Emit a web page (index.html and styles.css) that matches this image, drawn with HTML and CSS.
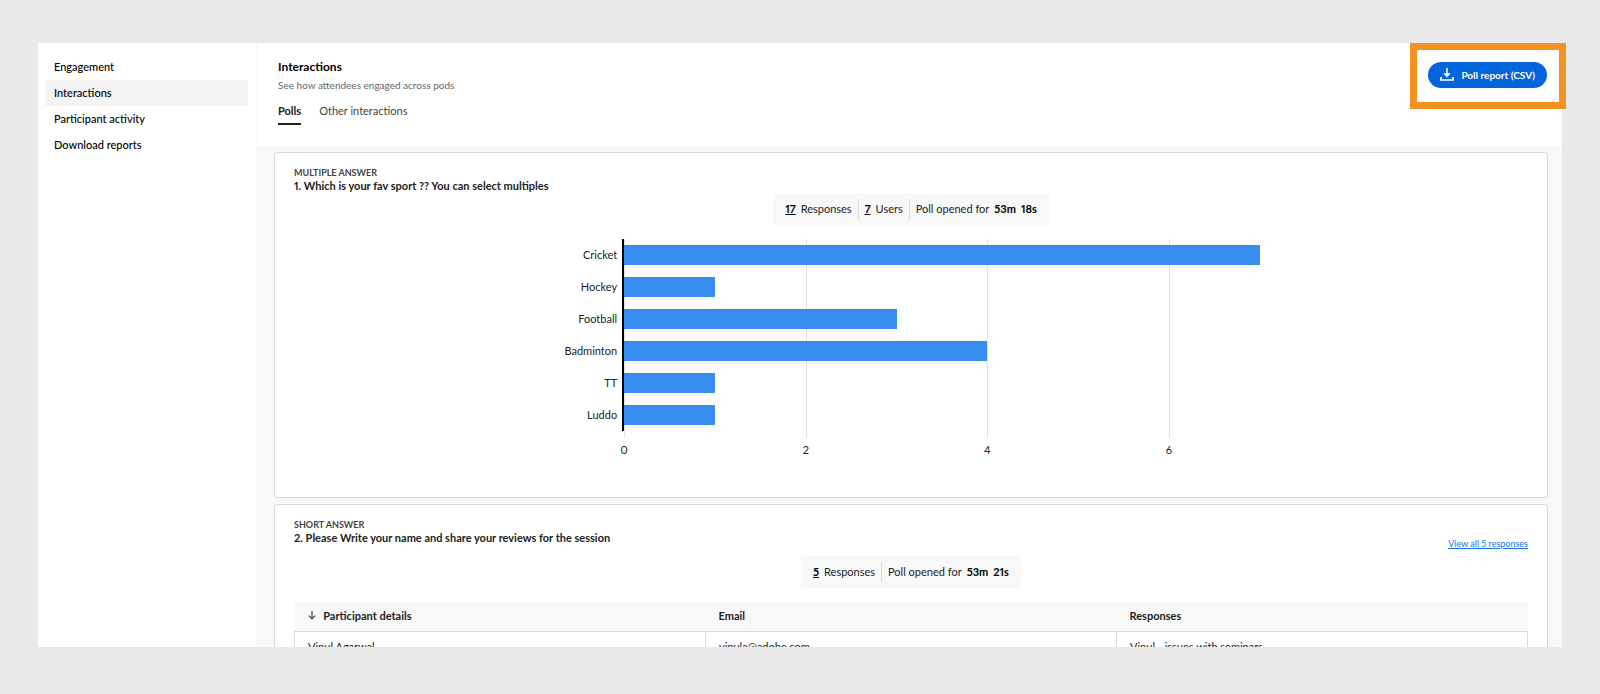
FILE: index.html
```html
<!doctype html>
<html lang="en">
  <head>
    <meta charset="UTF-8" />
    <meta name="viewport" content="width=device-width, initial-scale=1.0"/>
    <title>Interactions</title>
    <link rel="stylesheet" href="styles.css">
  </head>
  <body>
    <div class="dashboard">
      <nav class="sidebar">
        <a href="#engagement">Engagement</a>
        <a href="#interactions" class="active">Interactions</a>
        <a href="#activity">Participant activity</a>
        <a href="#downloads">Download reports</a>
      </nav>

      <main class="main">
        <header class="header">
          <div class="heading">
            <h1>Interactions</h1>
            <p>See how attendees engaged across pods</p>
            <div class="tabs" role="tablist">
              <button class="tab selected" role="tab" aria-selected="true">Polls</button>
              <button class="tab" role="tab" aria-selected="false">Other interactions</button>
            </div>
          </div>
          <div class="highlight">
            <button class="report-button">
              <svg width="14" height="14" viewBox="0 0 14 14" fill="none" stroke="#fff" stroke-width="2" aria-hidden="true">
                <path d="M7 0v6" stroke-width="1.5"/>
                <path d="M3.2 5.2h7.6L7 9.4z" fill="#fff" stroke="none"/>
                <path d="M1 9v3h12V9" stroke-width="1.7"/>
              </svg>
              Poll report (CSV)
            </button>
          </div>
        </header>

        <div class="content">
          <section class="card">
            <div class="poll-type">MULTIPLE ANSWER</div>
            <h2>1. Which is your fav sport ?? You can select multiples</h2>
            <div class="stats">
              <span><b class="count">17</b> Responses</span>
              <span><b class="count">7</b> Users</span>
              <span>Poll opened for <b>53m</b> <b>18s</b></span>
            </div>
            <div class="chart">
              <div class="labels">
                <span>Cricket</span>
                <span>Hockey</span>
                <span>Football</span>
                <span>Badminton</span>
                <span>TT</span>
                <span>Luddo</span>
              </div>
              <div class="grid-lines">
                <i></i><i></i><i></i><i></i>
              </div>
              <div class="bars">
                <div class="bar" style="width: 98.6%"></div>
                <div class="bar" style="width: 14.1%"></div>
                <div class="bar" style="width: 42.3%"></div>
                <div class="bar" style="width: 56.3%"></div>
                <div class="bar" style="width: 14.1%"></div>
                <div class="bar" style="width: 14.1%"></div>
              </div>
              <div class="ticks">
                <span>0</span><span>2</span><span>4</span><span>6</span>
              </div>
            </div>
          </section>

          <section class="card">
            <div class="poll-type">SHORT ANSWER</div>
            <h2>2. Please Write your name and share your reviews for the session</h2>
            <a class="view-all" href="#responses">View all 5 responses</a>
            <div class="stats">
              <span><b class="count">5</b> Responses</span>
              <span>Poll opened for <b>53m</b> <b>21s</b></span>
            </div>
            <table>
              <thead>
                <tr>
                  <th>
                    <svg width="8" height="9" viewBox="0 0 8 9" fill="none" stroke="#555" stroke-width="1.3" aria-hidden="true">
                      <path d="M4 0v8M1 4.8l3 3 3-3"/>
                    </svg>
                    Participant details
                  </th>
                  <th>Email</th>
                  <th>Responses</th>
                </tr>
              </thead>
              <tbody>
                <tr>
                  <td>Vipul Agarwal</td>
                  <td>vipula@adobe.com</td>
                  <td>Vipul - issues with seminars</td>
                </tr>
              </tbody>
            </table>
          </section>
        </div>
      </main>
    </div>
  </body>
</html>
```
FILE: styles.css
```css
* {
  box-sizing: border-box;
}
body {
  margin: 0;
  padding: 43px 38px 47px;
  height: 100vh;
  background-color: #e9e9e9;
  color: #222;
  font-family: Lato, "Open Sans", sans-serif;
  font-size: 11px;
  font-variant-numeric: proportional-nums;
  line-height: 14px;
}
h1, h2, p {
  margin: 0;
}
button {
  font-family: inherit;
  font-size: 11px;
  line-height: 14px;
  border: none;
  cursor: pointer;
}
.dashboard {
  display: flex;
  height: 100%;
  background-color: #fff;
}
.sidebar {
  width: 220px;
  padding: 11px 8px 0 7px;
  border-right: 2px solid #f8f8f8;
}
.sidebar a {
  display: block;
  padding: 6px 9px;
  color: #000;
  font-weight: 500;
  text-decoration: none;
}
.sidebar a.active {
  background-color: #f4f4f4;
}
.main {
  flex: 1;
  display: flex;
  flex-direction: column;
  min-width: 0;
}
.header {
  display: flex;
  justify-content: space-between;
  align-items: flex-start;
  padding: 0 0 21px 20px;
}
.heading {
  padding-top: 16px;
}
h1 {
  color: #000;
  font-size: 12px;
  line-height: 16px;
}
.heading p {
  margin-top: 3px;
  color: #666;
  font-size: 10px;
}
.tabs {
  display: flex;
  gap: 18px;
  margin-top: 12px;
}
.tab {
  padding: 0 0 5px;
  border-bottom: 2px solid transparent;
  background: none;
  color: #444;
}
.tab.selected {
  border-color: #222;
  color: #222;
  font-weight: bold;
}
/* frame sits slightly over the right edge of the page */
.highlight {
  margin-right: -4px;
  padding: 12px 12px 14px 11px;
  border: 7px solid #f39220;
}
.report-button {
  display: flex;
  align-items: center;
  gap: 7px;
  padding: 6px 12px;
  border-radius: 13px;
  background-color: #0265dc;
  color: #fff;
  font-size: 10px;
  font-weight: bold;
}
.content {
  flex: 1;
  min-height: 0;
  overflow: hidden;
  padding: 6px 14px 0 16px;
  background-color: #f8f8f8;
}
.card {
  margin-bottom: 6px;
  padding: 14px 19px 33px;
  border: 1px solid #d9d9d9;
  border-radius: 3px;
  background-color: #fff;
}
.poll-type {
  color: #444;
  font-size: 9px;
  font-weight: bold;
  line-height: 12px;
}
h2 {
  font-size: 11px;
  line-height: 14px;
}
.stats {
  display: flex;
  width: fit-content;
  margin: 0 auto;
  padding: 6px;
  border-radius: 3px;
  background-color: #f8f8f8;
}
.stats span {
  display: flex;
  gap: 5px;
  padding: 3px 6px;
}
.stats span + span {
  border-left: 1px solid #d9d9d9;
}
.stats b {
  color: #000;
}
.count {
  text-decoration: underline;
}
.chart {
  display: grid;
  grid-template-columns: 71px 1fr;
  grid-template-rows: 192px auto;
  width: 58%;
  margin: 14px auto 0;
}
.labels {
  display: grid;
  align-items: center;
  padding-right: 5px;
  border-right: 2px solid #000;
  text-align: right;
}
.bars {
  grid-area: 1 / 2;
  display: grid;
  align-items: center;
  z-index: 1;
}
.bar {
  height: 20px;
  background-color: #378ef0;
}
.grid-lines, .ticks {
  display: grid;
  grid-template-columns: 20fr 20fr 20fr 11fr;
}
.grid-lines {
  grid-area: 1 / 2;
  height: 199px;
}
.grid-lines i {
  border-left: 1px solid #e1e1e1;
}
.ticks {
  grid-area: 2 / 2;
  margin: 12px 0 7px;
}
.ticks span {
  width: 20px;
  margin-left: -10px;
  text-align: center;
}
.view-all {
  display: block;
  width: fit-content;
  margin: -7px 0 6px auto;
  color: #1473e6;
  font-size: 9px;
  line-height: 12px;
}
table {
  width: 100%;
  margin-top: 13px;
  table-layout: fixed;
  border-collapse: collapse;
}
th {
  padding: 8px 13px;
  background-color: #f8f8f8;
  text-align: left;
}
th svg {
  margin-right: 5px;
}
td {
  padding: 8px 13px;
  border: 1px solid #d9d9d9;
}
```
